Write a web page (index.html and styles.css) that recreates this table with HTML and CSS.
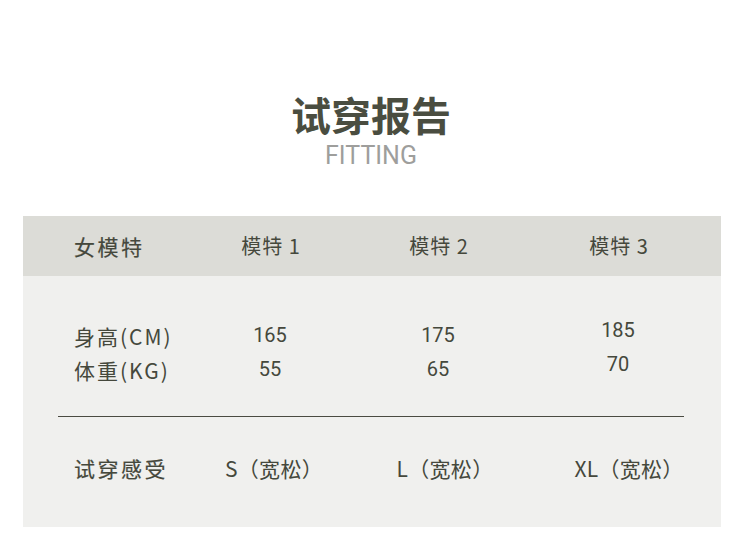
FILE: index.html
```html
<!DOCTYPE html>
<html lang="zh-CN">
<head>
<meta charset="utf-8">
<title>试穿报告</title>
<link rel="stylesheet" href="styles.css">
</head>
<body>
<div class="page">
  <header class="title-block">
    <h1 class="title">试穿报告</h1>
    <div class="subtitle">FITTING</div>
  </header>
  <section class="report">
    <div class="row head">
      <div class="cell label">女模特</div>
      <div class="cell">模特 1</div>
      <div class="cell">模特 2</div>
      <div class="cell">模特 3</div>
    </div>
    <div class="body">
      <div class="row measure">
        <div class="cell label"><div>身高(CM)</div><div>体重(KG)</div></div>
        <div class="cell"><div>165</div><div>55</div></div>
        <div class="cell"><div>175</div><div>65</div></div>
        <div class="cell raised"><div>185</div><div>70</div></div>
      </div>
      <div class="divider"></div>
      <div class="row feel">
        <div class="cell label">试穿感受</div>
        <div class="cell">S（宽松）</div>
        <div class="cell">L（宽松）</div>
        <div class="cell">XL（宽松）</div>
      </div>
    </div>
  </section>
</div>
</body>
</html>
```

FILE: styles.css
```css
* { box-sizing: border-box; margin: 0; padding: 0; }
html, body { background: #ffffff; }
body {
  font-family: "Noto Sans CJK SC", "Noto Sans", sans-serif;
  color: #45483c;
}
.page {
  width: 750px;
  height: 536px;
  padding-top: 92px;
}
.title-block {
  display: flex;
  flex-direction: column;
  align-items: center;
  padding-right: 8px;
}
.title {
  font-size: 40px;
  font-weight: 700;
  line-height: 44px;
  color: #4a4d40;
}
.subtitle {
  font-family: Roboto, "Liberation Sans", sans-serif;
  font-size: 25px;
  line-height: 28px;
  color: #9e9e9c;
  margin-top: 6px;
}
.report {
  margin: 46px 0 0 23px;
  width: 698px;
}
.row {
  display: grid;
  grid-template-columns: 162px 170px 166px 194px;
}
.cell {
  text-align: center;
  font-size: 20px;
  letter-spacing: 1px;
}
.cell.label {
  text-align: left;
  padding-left: 51px;
  font-size: 21px;
  letter-spacing: 2.5px;
}
.head {
  height: 60px;
  align-items: center;
  background: #dcdcd7;
}
.head .cell { line-height: 28px; }
.head .cell:not(.label) { padding-left: 2px; }
.head .cell.label,
.feel .cell.label {
  -webkit-text-stroke: 0.2px #45483c;
}
.body {
  background: #f0f0ee;
  padding: 42px 0 42px;
  display: flex;
  flex-direction: column;
}
.measure .cell { line-height: 34px; }
.measure .cell:not(.label) {
  font-family: Roboto, "Liberation Sans", sans-serif;
  font-size: 20px;
  letter-spacing: 0;
}
.measure .cell.raised { margin-top: -5px; }
.measure .label { letter-spacing: 2px; margin-top: 1px; }
.divider {
  height: 1px;
  background: #4a4b42;
  margin: 29px 37px 34px 35px;
}
.feel .cell { line-height: 34px; }
.feel .cell:not(.label) {
  font-size: 21px;
  letter-spacing: 0.3px;
}
.feel .cell:nth-child(2) { padding-left: 8px; }
.feel .cell:nth-child(3) { padding-left: 14px; }
.feel .cell:nth-child(4) { padding-left: 22px; }
```
